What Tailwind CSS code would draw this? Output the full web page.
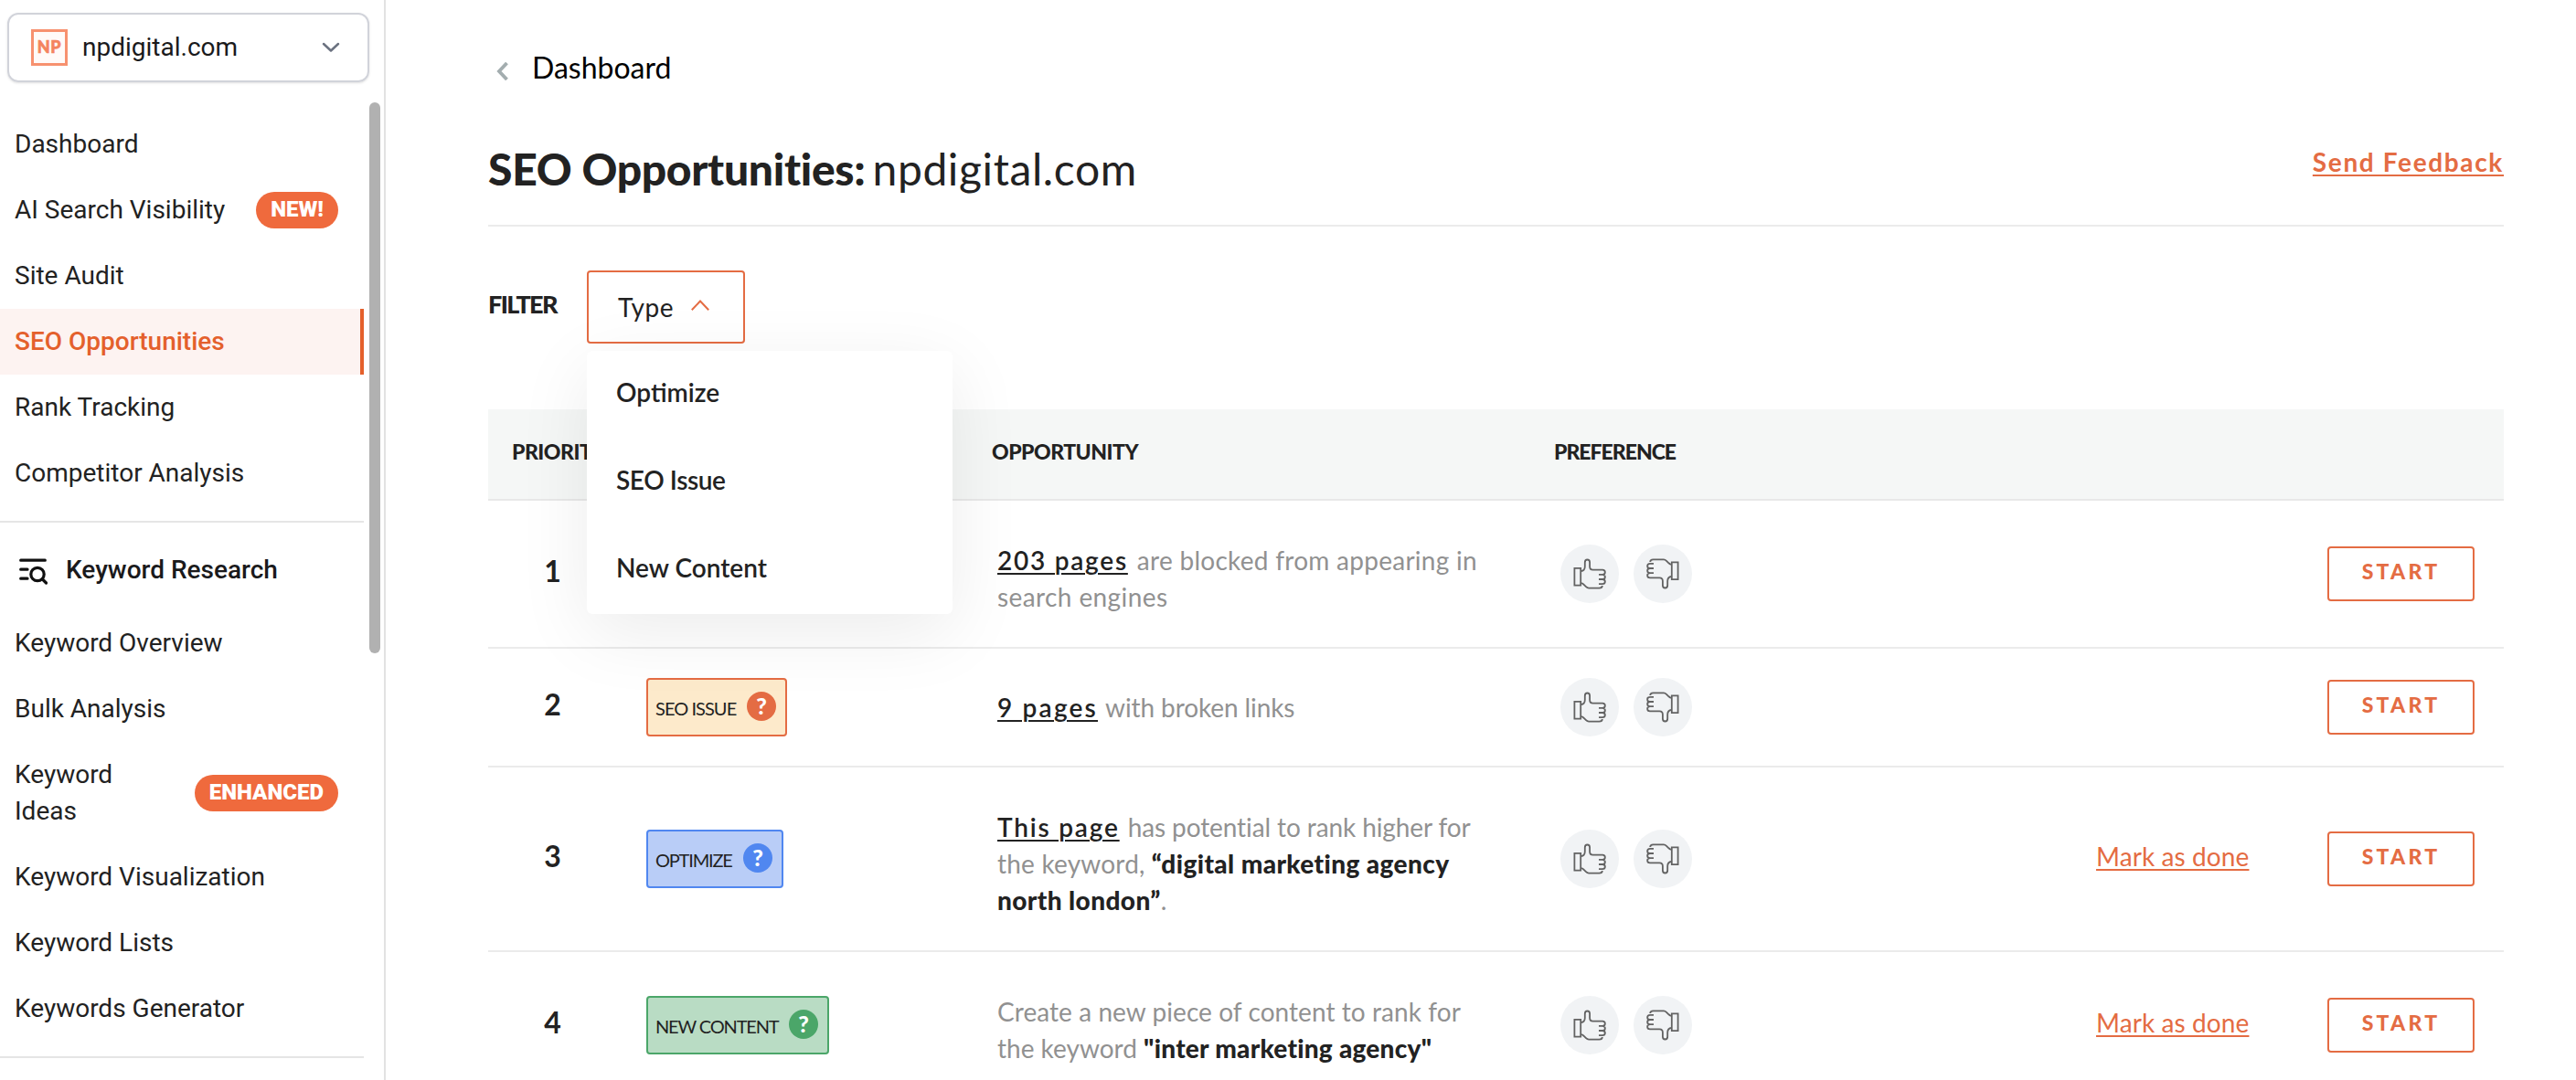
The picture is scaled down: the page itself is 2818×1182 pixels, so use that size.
<!DOCTYPE html>
<html lang="en">
<head>
  <meta charset="UTF-8">
  <title>SEO Opportunities: npdigital.com</title>
  <script src="https://cdn.jsdelivr.net/npm/@tailwindcss/browser@4"></script>
</head>
<body class="flex h-[1182px] overflow-hidden bg-white text-[#222] font-['Lato',sans-serif]">

  <!-- Shared icons -->
  <svg class="hidden">
    <symbol id="thumb" viewBox="0 0 64 64">
      <g fill="none" stroke="#636363" stroke-width="1.8" stroke-linejoin="round">
        <path d="M15.4 25.9h6.8v18.7h-6.8z" stroke-linejoin="miter" />
        <path d="M22.5 29c3-.2 4.3-2 4.3-5v-4.5c0-4 5.3-4 5.3 0v4.5c0 2.2 1.2 3.6 3.4 3.6h10.5c3.8 0 3.8 5.2 0 5.2h-4M46 32.8c3.8 0 3.8 5.2 0 5.2h-4M46 38c3.8 0 3.8 5.2 0 5.2h-4" />
        <path d="M22.5 42.2c1.6 0 2.3.8 3.2 1.7l2.3 2.3c.9.9 1.7 1.4 3 1.4h11.5c2 0 3.3-.7 3.3-2.6" />
      </g>
    </symbol>
  </svg>

  <!-- Sidebar -->
  <aside class="w-[422px] shrink-0 border-r-2 border-[#e2e2e2] font-['Roboto',sans-serif] text-[28px] leading-10">
    <div class="pl-2 pt-3.5">
      <button class="flex items-center w-[396px] h-[76px] pl-6 pr-[30px] border-2 border-[#d1d3da] rounded-xl shadow-sm text-left text-[#1a1a1c]">
        <svg class="w-10 h-10" viewBox="0 0 40 40">
          <rect x="1.5" y="1.5" width="37" height="37" fill="#fffaf8" stroke="#f7916f" stroke-width="3" />
          <text x="20" y="26" text-anchor="middle" font-family="Lato" font-weight="900" font-size="18" letter-spacing=".6" stroke="#f4845f" stroke-width=".6" fill="#f4845f">NP</text>
        </svg>
        <span class="ml-4 flex-1">npdigital.com</span>
        <svg class="w-5 h-3" viewBox="0 0 20 12" fill="none" stroke="#6b7280" stroke-width="2.5" stroke-linecap="round" stroke-linejoin="round"><path d="M2 2l8 7.5L18 2" /></svg>
      </button>
    </div>

    <div class="flex mt-[22px] gap-1.5">
      <nav class="w-[398px] pt-2.5">
        <a class="block px-4 py-4">Dashboard</a>
        <a class="flex items-center justify-between pl-4 pr-7 py-4">AI Search Visibility
          <span class="h-10 px-4 rounded-full bg-[#ef6a3d] text-white text-2xl leading-[38px] font-black">NEW!</span>
        </a>
        <a class="block px-4 py-4">Site Audit</a>
        <a class="block px-4 py-4 bg-[#fdf3f1] border-r-4 border-[#e4602c] text-[#e4602c] font-medium">SEO Opportunities</a>
        <a class="block px-4 py-4">Rank Tracking</a>
        <a class="block px-4 py-4">Competitor Analysis</a>

        <div class="flex items-center mt-4 h-[98px] pt-2 pl-5 border-t-2 border-[#e5e5e5] text-[#1a1a1c] font-medium">
          <svg class="w-8 h-8 mt-1" viewBox="0 0 32 32" fill="none" stroke="#111" stroke-width="3.2" stroke-linecap="round">
            <path d="M2.7 3.2h26.6M2.7 13.2H10M2.7 23.2H10" />
            <circle cx="21" cy="18.5" r="7.2" /><path d="M26.5 24l4 4" />
          </svg>
          <span class="ml-5">Keyword Research</span>
        </div>
        <a class="block px-4 py-4">Keyword Overview</a>
        <a class="block px-4 py-4">Bulk Analysis</a>
        <a class="flex items-center justify-between pl-4 pr-7 py-4"><span>Keyword<br>Ideas</span>
          <span class="h-10 px-4 rounded-full bg-[#ef6a3d] text-white text-2xl leading-[38px] font-black">ENHANCED</span>
        </a>
        <a class="block px-4 py-4">Keyword Visualization</a>
        <a class="block px-4 py-4">Keyword Lists</a>
        <a class="block px-4 py-4">Keywords Generator</a>
        <hr class="mt-4 border-t-2 border-[#e5e5e5]">
      </nav>
      <div class="w-3 h-[603px] rounded-full bg-[#b1b1b1]"></div>
    </div>
  </aside>

  <!-- Main -->
  <main class="flex-1 pl-[112px] pr-[79px] pt-[54px]">
    <a class="flex items-center h-10 pl-2 text-[32px] leading-10 text-black">
      <svg class="w-4 h-5 mt-2" viewBox="0 0 16 20" fill="none" stroke="#a3adaf" stroke-width="3.8"><path d="M12.5 1L4 10l8.500 9" /></svg>
      <span class="ml-6">Dashboard</span>
    </a>

    <div class="flex justify-between mt-[60px] h-[94px] border-b-2 border-[#ebebeb]">
      <h1 class="flex gap-2 pt-px text-5xl leading-[60px]">
        <b class="font-black tracking-[-0.3px]">SEO Opportunities:</b><span class="tracking-[0.6px]">npdigital.com</span>
      </h1>
      <a class="mt-[3px] text-[28px] leading-10 font-bold tracking-[1.65px] text-[#e46c43] underline decoration-2 underline-offset-3">Send Feedback</a>
    </div>

    <!-- Filter -->
    <div class="flex items-center mt-12 text-[28px] leading-10">
      <b class="w-[108px] pb-[7px] text-[27px] font-black tracking-[-1.6px]">FILTER</b>
      <div class="relative">
        <button class="flex items-center w-[173px] h-20 pl-8 border-2 border-[#e46c43] rounded-sm tracking-[0.5px]">Type
          <svg class="ml-[19px] mb-1 w-5 h-3" viewBox="0 0 20 12" fill="none" stroke="#e46c43" stroke-width="2"><path d="M.8 11.3L10 1.5l9.2 9.8" /></svg>
        </button>
        <div class="absolute left-0 top-[88px] z-10 w-[400px] h-72 rounded-md bg-white font-semibold shadow-[0_20px_80px_rgba(0,0,0,0.08)]">
          <div class="h-24 pl-8 pt-[25px]">Optimize</div>
          <div class="h-24 pl-8 pt-[25px] tracking-[-0.4px]">SEO Issue</div>
          <div class="h-24 pl-8 pt-[25px]">New Content</div>
        </div>
      </div>
    </div>

    <!-- Opportunities -->
    <div class="mt-[72px]">
      <div class="grid grid-cols-[525px_615px_1fr] h-[100px] pl-[26px] pt-7 bg-[#f5f7f6] border-b-2 border-[#e8e8e8] text-[23px] leading-9 font-black tracking-[-0.5px]">
        <span>PRIORITY</span><span>OPPORTUNITY</span><span class="tracking-[-1px]">PREFERENCE</span>
      </div>

      <div class="grid grid-cols-[173px_384px_616px_586px_253px_1fr] items-center h-[162px] border-b-2 border-[#ebebeb] text-[28px] leading-10">
        <b class="w-[141px] pb-1.5 text-center text-[32px]">1</b>
        <div></div>
        <p class="pt-2.5 text-[#919191] whitespace-nowrap"><a class="font-semibold text-[#222] tracking-[1.75px] underline decoration-2 underline-offset-3">203 pages</a><span class="ml-2.5 tracking-[0.27px]">are blocked from appearing in</span><br><span class="tracking-[0.4px]">search engines</span></p>
        <div class="flex gap-4">
          <svg class="size-16 rounded-full bg-[#f1f3f5]"><use href="#thumb" /></svg>
          <svg class="size-16 rounded-full bg-[#f1f3f5] rotate-180"><use href="#thumb" /></svg>
        </div>
        <div></div>
        <button class="w-[161px] h-[60px] pb-[7px] border-2 border-[#e46c43] rounded-sm text-[23px] font-black tracking-[3.2px] text-[#e46c43]">START</button>
      </div>

      <div class="grid grid-cols-[173px_384px_616px_586px_253px_1fr] items-center h-[130px] border-b-2 border-[#ebebeb] text-[28px] leading-10">
        <b class="w-[141px] pb-1.5 text-center text-[32px]">2</b>
        <div class="flex w-[154px] h-16 pl-2 border-2 border-[#e46c43] rounded-sm bg-[#fdeacb]">
          <span class="w-[100px] pt-[11px] text-xl leading-10 tracking-[-0.95px]">SEO ISSUE</span>
          <span class="size-8 mt-[13px] rounded-full bg-[#e46c43] text-white text-center text-[25px] leading-[31px] font-black">?</span>
        </div>
        <p class="text-[#919191] whitespace-nowrap"><a class="font-semibold text-[#222] tracking-[2.2px] underline decoration-2 underline-offset-3">9 pages</a><span class="ml-2 tracking-[-0.1px]">with broken links</span></p>
        <div class="flex gap-4">
          <svg class="size-16 rounded-full bg-[#f1f3f5]"><use href="#thumb" /></svg>
          <svg class="size-16 rounded-full bg-[#f1f3f5] rotate-180"><use href="#thumb" /></svg>
        </div>
        <div></div>
        <button class="w-[161px] h-[60px] pb-[7px] border-2 border-[#e46c43] rounded-sm text-[23px] font-black tracking-[3.2px] text-[#e46c43]">START</button>
      </div>

      <div class="grid grid-cols-[173px_384px_616px_586px_253px_1fr] items-center h-[202px] border-b-2 border-[#ebebeb] text-[28px] leading-10">
        <b class="w-[141px] pb-1.5 text-center text-[32px]">3</b>
        <div class="flex w-[150px] h-16 pl-2 border-2 border-[#5087f0] rounded-sm bg-[#b9cdf7]">
          <span class="w-24 pt-[11px] text-xl leading-10 tracking-[-1.2px]">OPTIMIZE</span>
          <span class="size-8 mt-[13px] rounded-full bg-[#5087f0] text-white text-center text-[25px] leading-[31px] font-black">?</span>
        </div>
        <p class="pt-2.5 text-[#919191] whitespace-nowrap"><a class="font-semibold text-[#222] tracking-[1.8px] underline decoration-2 underline-offset-3">This page</a><span class="ml-[9px] tracking-[-0.1px]">has potential to rank higher for</span><br><span class="tracking-[0.2px]">the keyword,</span> <b class="font-black text-[#222] tracking-[0.4px]">“digital marketing agency<br>north london”</b>.</p>
        <div class="flex gap-4">
          <svg class="size-16 rounded-full bg-[#f1f3f5]"><use href="#thumb" /></svg>
          <svg class="size-16 rounded-full bg-[#f1f3f5] rotate-180"><use href="#thumb" /></svg>
        </div>
        <div class="pb-1.5"><a class="tracking-[0.1px] text-[#e46c43] underline decoration-2 underline-offset-3">Mark as done</a></div>
        <button class="w-[161px] h-[60px] pb-[7px] border-2 border-[#e46c43] rounded-sm text-[23px] font-black tracking-[3.2px] text-[#e46c43]">START</button>
      </div>

      <div class="grid grid-cols-[173px_384px_616px_586px_253px_1fr] items-center h-[162px] border-b-2 border-[#ebebeb] text-[28px] leading-10">
        <b class="w-[141px] pb-1.5 text-center text-[32px]">4</b>
        <div class="flex w-[200px] h-16 pl-2 border-2 border-[#4ba669] rounded-sm bg-[#b9dcc4]">
          <span class="w-[146px] pt-[11px] text-xl leading-10 tracking-[-1.15px]">NEW CONTENT</span>
          <span class="size-8 mt-[13px] rounded-full bg-[#4ba669] text-white text-center text-[25px] leading-[31px] font-black">?</span>
        </div>
        <p class="pt-2.5 text-[#919191] whitespace-nowrap"><span class="tracking-[0.07px]">Create a new piece of content to rank for</span><br>the keyword <b class="font-black text-[#222] tracking-[0.25px]">"inter marketing agency"</b></p>
        <div class="flex gap-4">
          <svg class="size-16 rounded-full bg-[#f1f3f5]"><use href="#thumb" /></svg>
          <svg class="size-16 rounded-full bg-[#f1f3f5] rotate-180"><use href="#thumb" /></svg>
        </div>
        <div class="pb-1.5"><a class="tracking-[0.1px] text-[#e46c43] underline decoration-2 underline-offset-3">Mark as done</a></div>
        <button class="w-[161px] h-[60px] pb-[7px] border-2 border-[#e46c43] rounded-sm text-[23px] font-black tracking-[3.2px] text-[#e46c43]">START</button>
      </div>
    </div>
  </main>

</body>
</html>
